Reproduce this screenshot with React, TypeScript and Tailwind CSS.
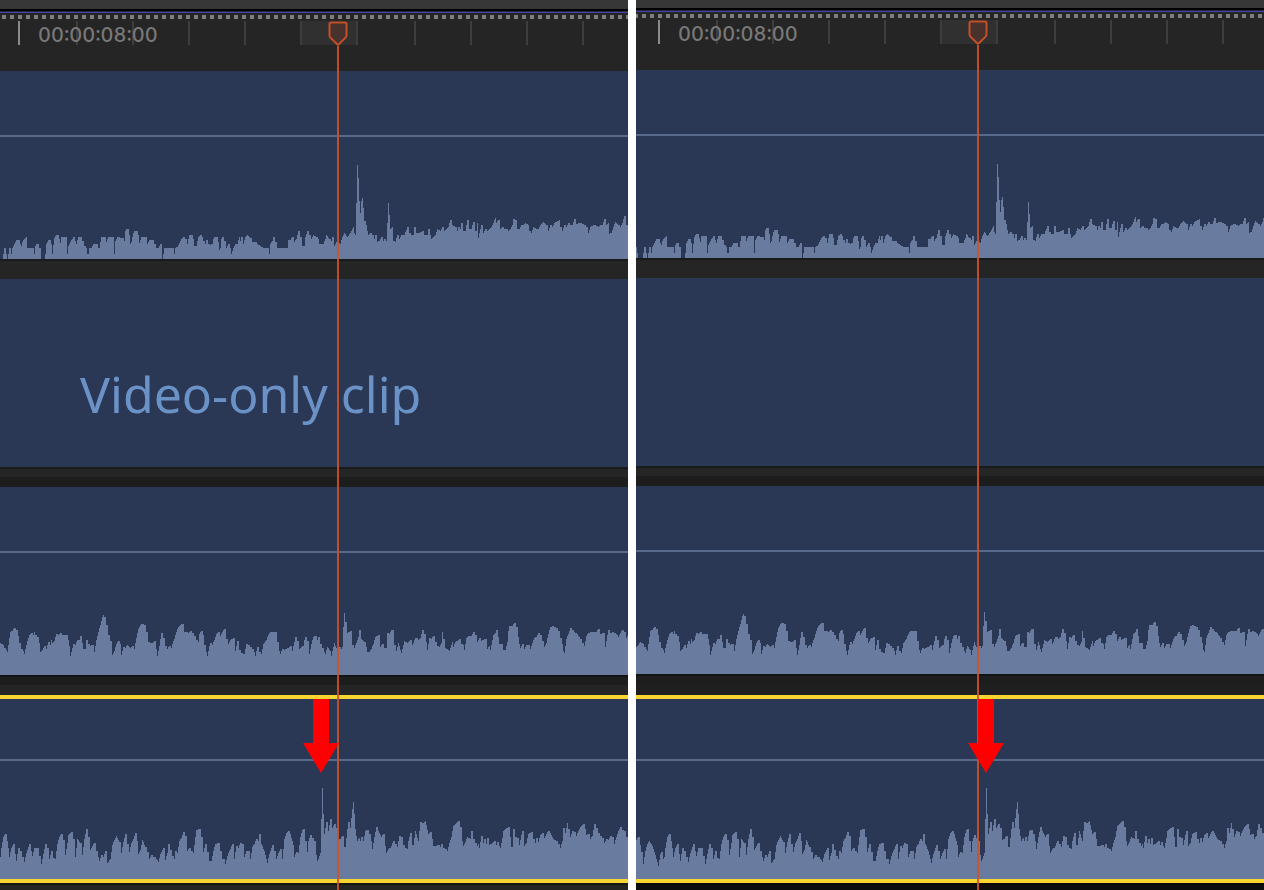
import React from 'react';

interface PaneProps {
  // left edge of the visible part of the timeline
  start: number;
  // how far the selected clip is slipped along the timeline
  slip: number;
  arrowX: number;
  label?: string;
  // height classes of the bars that differ between the panes
  headerClass: string;
  gapClass: string;
  footerClass: string;
}

// x,height pairs, height counted up from the bottom of the clip
const CAMERA_AUDIO = `
-4,11 -3,5 -2,0 2,0 3,5 4,11 5,11 6,5 7,0 8,5 9,11 10,11 11,5 12,11 14,15 16,19 19,19 20,15 21,13 22,17 24,20 26,22 27,11 33,11
34,5 35,13 36,15 38,15 39,11 40,11 41,0 44,0 45,5 46,15 48,19 50,19 51,15 52,5 53,14 54,21 56,24 58,24 59,20 60,16
61,22 65,22 67,5 68,13 70,17 72,20 73,22 75,18 76,15 78,22 81,22 82,18 84,13 86,11 87,5 88,5 89,11 91,11 93,15 96,15
98,11 99,11 101,22 105,22 106,17 108,22 112,22 114,5 115,18 117,22 122,21 124,18 125,28 126,30 127,30 129,24 130,15
131,17 133,26 134,28 136,28 138,24 139,16 141,22 145,22 147,15 149,19 153,19 154,15 156,11 158,11 160,15 161,15
162,0 163,5 164,11 173,11 174,5 175,11 177,12 179,16 181,20 183,22 185,20 187,15 188,20 189,24 192,24 193,20 194,13
196,13 198,22 200,24 202,22 203,18 205,15 206,19 208,15 210,14 212,15 213,20 214,22 217,22 218,17 219,9 220,11
221,20 222,22 224,18 226,11 228,15 230,11 231,5 233,11 235,15 237,15 239,22 240,18 241,22 243,15 245,22 247,24
250,21 252,17 255,17 257,15 260,13 263,11 268,11 269,5 270,15 272,18 273,22 275,17 277,11 287,11 288,19 290,19
292,22 294,17 296,20 298,28 300,22 302,13 304,13 305,22 307,28 309,24 311,20 313,24 316,22 318,20 319,15 323,15
325,20 326,24 329,20 331,18 332,22 334,13 336,17 340,15 342,22 344,26 347,22 350,26 352,30 353,32 354,26 355,24
356,56 357,94 358,81 359,58 360,46 361,58 362,61 363,51 364,38 366,34 367,28 368,24 370,26 372,24 374,20 375,24
377,17 379,18 381,22 383,18 384,20 386,18 387,36 388,56 389,44 390,30 392,32 393,18 395,17 397,24 399,20 401,24
404,24 407,32 409,26 411,24 413,24 414,32 416,26 419,26 422,28 424,24 427,24 428,30 430,24 431,20 433,22 435,24
437,30 440,28 442,32 444,28 446,30 448,32 450,39 452,34 455,32 457,28 458,32 460,30 461,36 463,28 465,28 467,39
469,30 471,30 473,37 475,28 476,28 477,36 478,21 480,30 481,34 483,26 485,30 487,28 489,30 491,32 493,36 495,41
496,36 498,39 500,30 502,32 504,30 506,30 508,28 510,30 512,34 513,40 515,39 517,30 519,30 521,34 523,34 525,36
528,34 529,28 531,26 533,32 536,30 538,30 540,34 543,37 546,34 548,28 550,34 552,32 554,36 559,39 560,32 562,28
564,34 566,32 568,36 570,34 572,34 574,40 576,35 580,36 584,34 586,32 588,26 590,32 594,34 598,32 600,34 602,34
604,40 606,34 608,36 609,25 611,26 613,32 615,37 618,34 620,32 622,36 624,43 626,34 628,32`;

const ROOM_AUDIO = `
-4,27 -2,29 0,32 3,30 4,27 6,25 7,23 8,30 10,43 12,44 14,47 16,45 18,39 19,32 21,26 23,24 24,21 25,26 27,34 29,40 31,42 33,40
34,43 35,40 37,38 39,32 40,23 42,25 44,29 46,26 48,33 50,30 51,35 52,32 54,34 56,41 58,40 60,42 62,40 66,40 68,35
69,29 70,19 71,23 73,31 75,30 77,35 79,35 80,39 82,32 83,26 85,26 86,35 88,31 90,29 92,30 94,23 96,35 98,43 100,50
102,58 103,60 104,58 106,50 108,40 110,34 112,20 114,24 116,31 118,34 120,31 121,20 123,28 125,27 127,30 130,27
132,29 134,26 136,37 138,46 140,50 142,51 144,50 146,43 148,33 150,32 152,32 154,34 156,26 157,19 159,29 161,42
163,37 165,29 167,26 169,29 171,27 172,31 174,36 176,43 178,48 180,50 182,51 184,43 186,43 188,42 190,44 192,42
194,39 196,35 198,33 199,41 201,44 203,40 204,30 206,23 207,19 209,29 210,32 212,30 214,35 216,41 218,43 220,39
222,43 224,46 226,36 228,31 230,35 233,37 235,24 237,34 239,25 241,22 244,21 246,31 248,30 250,28 252,26 254,23
255,19 257,28 259,23 261,21 263,31 266,35 268,40 270,43 275,43 277,33 279,24 280,21 282,26 284,25 286,26 288,27
290,29 292,24 294,33 295,38 297,34 299,26 301,28 303,29 304,35 305,38 307,34 309,21 311,31 313,38 315,39 317,35
318,38 320,31 322,27 324,23 325,21 327,28 330,24 331,19 333,28 334,32 337,24 339,28 341,26 342,28 343,48 344,62
345,53 347,42 350,44 352,30 354,27 356,32 358,38 359,45 361,36 364,33 366,28 367,23 369,23 371,26 373,31 375,38
378,40 380,28 382,31 384,27 386,27 387,42 389,41 391,45 392,45 394,30 396,24 398,32 401,22 403,30 404,34 407,32
410,35 412,30 415,37 417,37 418,35 420,37 422,45 424,41 426,33 427,25 429,37 431,36 433,39 435,33 437,29 439,28
441,32 442,43 443,36 445,27 449,24 452,33 453,28 455,33 457,34 459,36 461,31 463,30 464,25 466,37 468,39 471,39
473,43 475,40 477,33 479,37 481,34 485,36 487,26 489,29 490,25 493,40 495,42 496,45 498,38 499,31 501,31 503,25
505,25 507,33 508,44 509,49 512,49 514,52 516,48 518,38 519,31 520,27 522,31 524,26 526,30 528,30 530,26 532,32
534,37 536,38 538,42 540,40 542,34 544,28 546,32 548,41 550,48 553,49 556,47 558,44 560,37 562,31 563,24 564,22
566,36 568,41 570,47 572,45 574,43 577,41 580,36 582,32 584,29 586,39 588,42 592,43 596,43 598,46 600,41 603,42
605,28 607,40 608,45 610,42 613,43 617,40 618,38 620,42 622,45 624,43 626,37 628,40`;

const RECORDER_AUDIO = `
-28,39 -26,42 -24,34 -23,27 -21,15 -19,28 -17,35 -15,38 -12,33 -9,24 -6,13 -4,25 -3,27 -1,20 0,22
1,31 3,42 5,45 7,38 8,31 9,22 11,31 13,35 15,25 16,18 18,31 20,28 22,22 24,17 26,26 29,35 31,28 32,23 34,31 37,31
39,23 41,15 43,25 45,35 47,31 49,20 51,28 53,21 55,20 57,35 59,42 61,45 63,39 65,24 67,36 68,44 71,47 73,40 75,22
77,40 80,36 82,24 84,40 86,50 88,42 90,29 92,33 94,36 96,28 98,22 99,18 101,24 103,22 105,28 107,16 110,20 112,34
114,39 116,43 119,37 121,26 123,37 125,45 127,35 129,27 131,36 133,40 135,46 137,38 138,25 140,29 142,39 145,32
147,27 149,20 151,24 153,22 155,22 158,17 160,25 163,31 165,19 167,26 168,35 170,29 172,23 174,20 175,28 177,26
179,38 181,41 183,47 185,43 187,28 189,31 191,28 193,26 195,42 196,49 199,50 201,42 203,27 205,35 207,27 209,18
211,18 213,28 215,35 218,36 220,28 222,20 224,20 225,15 227,23 229,28 232,35 234,20 236,33 238,31 240,36 242,35
244,22 246,28 249,28 250,20 252,32 254,35 256,40 258,38 259,45 261,35 264,28 267,16 269,25 272,34 274,28 276,20
278,26 280,30 282,20 284,40 286,46 288,48 290,45 293,34 294,22 296,27 298,26 300,42 302,49 303,50 305,38 307,27
308,38 310,44 312,41 314,38 316,24 317,18 318,20 320,26 321,60 322,91 323,65 324,45 326,57 328,48 330,60 332,51
334,55 336,51 338,39 340,40 342,43 344,32 345,32 347,50 348,57 350,51 352,70 353,77 354,65 355,50 356,43 357,38
359,41 360,38 361,42 363,38 365,48 367,49 369,45 371,38 372,30 374,42 376,52 378,48 381,42 383,45 385,33 386,26
388,30 390,31 393,38 395,35 397,32 399,43 401,42 403,34 405,31 407,30 408,38 410,46 412,34 413,34 415,48 418,38
420,57 423,56 425,58 428,45 430,47 432,40 433,33 436,33 438,34 440,32 441,35 443,31 445,30 447,28 449,36 451,42
453,53 455,55 458,58 460,52 462,38 463,33 465,37 467,42 470,40 471,48 473,40 475,36 477,33 478,35 479,31 481,43
483,36 484,40 486,35 487,41 489,34 492,36 494,38 496,34 497,37 499,33 500,31 502,41 503,48 505,50 508,52 510,42
511,32 512,32 513,50 515,42 517,41 519,34 521,44 522,48 524,33 526,36 528,45 531,47 533,40 535,36 536,41 538,37
540,44 542,46 544,41 546,45 548,48 550,46 553,40 556,38 558,35 560,31 562,38 563,51 565,46 567,56 568,50 570,42
572,48 574,47 576,43 578,48 580,52 583,55 585,50 586,44 588,45 590,40 592,43 594,55 596,51 598,46 600,43 602,41
604,36 606,40 608,39 610,43 612,42 614,35 616,42 618,48 620,52 622,49 624,48 626,42 628,40`;

// One column per pixel, so the wave keeps its stepped outline.
// Short drops hold their level until the next sample, which keeps the peaks full.
const toPath = (samples: string) => {
  const points = samples.trim().split(/\s+/).map((pair) => pair.split(',').map(Number));
  const first = points[0][0];
  let path = `M${first} 100`;
  for (let i = 0; i < points.length; i++) {
    const [x, h] = points[i];
    const [nextX, nextH] = points[i + 1] ?? [x + 1, h];
    const hold = nextH < h && nextX - x <= 2;
    for (let px = x; px < nextX; px++) {
      const height = hold ? h : Math.round(h + ((nextH - h) * (px - x)) / (nextX - x));
      path += `V${100 - height}H${px + 1}`;
    }
  }
  return `${path}V100Z`;
};

const Waveform: React.FC<{ samples: string; shift: number }> = ({ samples, shift }) => (
  <svg className="block w-full h-[100px]" aria-hidden="true">
    <path d={toPath(samples)} transform={`translate(${shift} 0)`} fill="#6a7ba0" shapeRendering="crispEdges" />
  </svg>
);

const AudioClip: React.FC<{ samples: string; shift: number; selected?: boolean }> = ({ samples, shift, selected }) => (
  <div
    className={`shrink-0 flex flex-col justify-between h-[188px] bg-[#2a3755] ${
      selected ? 'border-y-4 border-[#f8d530]' : ''
    }`}
  >
    <div className={selected ? 'h-[62px] border-b-2 border-[#596989]' : 'h-[66px] border-b-2 border-[#596989]'} />
    <Waveform samples={samples} shift={shift} />
  </div>
);

const Ruler: React.FC<{ start: number }> = ({ start }) => {
  const ticks = [76, 132, 188, 244, 300, 356, 414, 470, 526, 582];
  const dots = Array.from({ length: 80 }, (_, i) => i * 8 - 6);

  return (
    <div className="relative shrink-0 h-[58px] bg-[#252525]">
      <svg className="block w-full h-full" aria-hidden="true">
        <g transform={`translate(${-start} 0)`} shapeRendering="crispEdges">
          {dots.map((x) => (
            <rect key={x} x={x} y="2" width="4" height="4" fill="#7e7e7e" />
          ))}
          <rect x="300" y="8" width="58" height="24" fill="#303030" />
          <rect x="18" y="8" width="2" height="24" fill="#8b8b8b" />
          {ticks.map((x) => (
            <rect key={x} x={x} y="8" width="2" height="24" fill="#3d3d3d" />
          ))}
        </g>
      </svg>
      <time
        className="absolute top-2.5 left-[38px] font-['Inter',sans-serif] font-medium text-[20px] leading-6 tabular-nums text-[#787878]"
        style={{ marginLeft: -start }}
      >
        00:00:08:00
      </time>
    </div>
  );
};

const Playhead: React.FC<{ x: number }> = ({ x }) => (
  <div className="absolute top-0 bottom-0 w-5 flex flex-col items-center" style={{ left: x - 10 }}>
    <svg className="shrink-0 w-5 h-[25px]" viewBox="0 0 20 25" aria-hidden="true">
      <path
        d="M3 1.5H17Q18.5 1.5 18.5 3V14.5Q18.5 15.5 17.8 16.4L10.8 23.2Q10 24 9.2 23.2L2.2 16.4Q1.5 15.5 1.5 14.5V3Q1.5 1.5 3 1.5Z"
        fill="#47322d"
        stroke="#c34f29"
        strokeWidth="2"
      />
    </svg>
    <div className="flex-1 w-0.5 bg-[#cd5228]/90" />
  </div>
);

const Arrow: React.FC<{ x: number }> = ({ x }) => (
  <svg className="absolute top-1 w-9 h-[74px]" style={{ left: x }} viewBox="0 0 36 74" aria-hidden="true">
    <path d="M10 0H26V44H36L18 74L0 44H10Z" fill="#ff0000" />
  </svg>
);

const Pane: React.FC<PaneProps> = ({ start, slip, arrowX, label, headerClass, gapClass, footerClass }) => (
  <section className="relative flex-1 min-w-0 flex flex-col overflow-hidden bg-[#252525]">
    <div className={`shrink-0 bg-[#373737] ${headerClass}`} />
    <div className="shrink-0 h-0.5 bg-black" />
    <div className="shrink-0 h-0.5 bg-[#4744a0] border-t border-[#26254a]" />

    <div className="relative flex-1 flex flex-col">
      <Ruler start={start} />
      <AudioClip samples={CAMERA_AUDIO} shift={-start} />
      <div className="shrink-0 h-5 bg-[#252525] border-t-2 border-[#191b1a]" />
      <div className="shrink-0 h-[188px] bg-[#2a3755] pl-20 pt-20">
        {label && (
          <p className="font-['Noto_Sans','Open_Sans',sans-serif] text-[50px] leading-[70px] whitespace-nowrap text-[#6b92c6]">
            {label}
          </p>
        )}
      </div>
      <div className="shrink-0 h-2.5 bg-[#252525] border-t-2 border-[#191b1a]" />
      <div className="shrink-0 h-2.5 bg-[#1d1d1d]" />
      <AudioClip samples={ROOM_AUDIO} shift={-start} />
      <div className="shrink-0 h-2.5 bg-[#1d1d1d] border-t-2 border-[#121413]" />
      <div className={`shrink-0 ${gapClass}`} />
      <AudioClip samples={RECORDER_AUDIO} shift={slip - start} selected />
      <div className={`flex-1 min-h-[7px] border-t-2 ${footerClass}`} />

      <div className="absolute inset-x-0 top-2 bottom-0">
        <Playhead x={338 - start} />
      </div>
      <div className="absolute inset-x-0 bottom-0 h-[195px]">
        <Arrow x={arrowX} />
      </div>
    </div>
  </section>
);

const App: React.FC = () => {
  return (
    <main className="flex gap-2 min-h-screen bg-white">
      <Pane
        start={0}
        slip={0}
        arrowX={303}
        label="Video-only clip"
        headerClass="h-[9px]"
        gapClass="h-2.5 bg-[#252525]"
        footerClass="bg-[#242624] border-[#161816]"
      />
      <Pane
        start={-4}
        slip={24}
        arrowX={332}
        headerClass="h-2"
        gapClass="h-[11px] bg-[#1e1f1e]"
        footerClass="bg-[#0d0d0d] border-[#080808]"
      />
    </main>
  );
};

export default App;
